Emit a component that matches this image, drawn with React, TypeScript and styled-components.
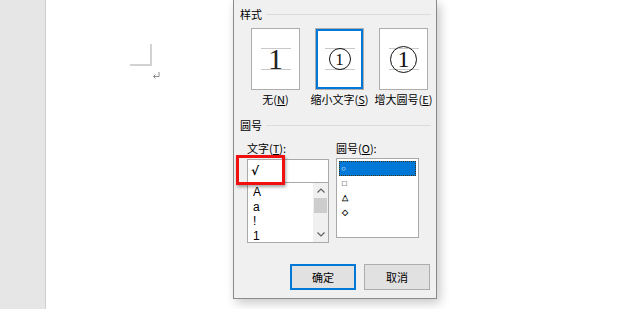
import * as React from 'react';
import styled, { createGlobalStyle } from 'styled-components';

const GlobalStyle = createGlobalStyle`
    html, body {
        margin: 0;
        padding: 0;
    }
    body {
        width: 620px;
        height: 309px;
        overflow: hidden;
        background: #fff;
        font-family: "Noto Sans CJK SC", "Noto Sans", sans-serif;
        font-size: 11px;
        color: #000;
    }
`;

const Screen = styled.div`
    display: flex;
    width: 620px;
    height: 309px;
`;

const Gutter = styled.div`
    width: 45px;
    background: #e6e6e6;
    border-right: 1px solid #cfcfcf;
`;

const Page = styled.div`
    position: relative;
    flex: 1;
    background: #fff;
    padding: 44px 0 0 84px;
`;

const CornerMark = styled.div`
    width: 20px;
    height: 20px;
    border-right: 2px solid #d2d2d2;
    border-bottom: 2px solid #d2d2d2;
`;

const ReturnMark = styled.svg`
    display: block;
    margin: 6px 0 0 22px;
`;

const Dialog = styled.div`
    position: absolute;
    left: 187px;
    top: 0;
    width: 204px;
    height: 299px;
    box-sizing: border-box;
    background: #f0f0f0;
    border: 1px solid #8a8a8a;
    border-top: none;
    box-shadow: 3px 4px 10px rgba(0, 0, 0, 0.22);
    display: flex;
    flex-direction: column;
    font-size: 11px;
`;

const GroupHeader = styled.div`
    display: flex;
    align-items: center;
    gap: 4px;
    height: 16px;
    line-height: 16px;
    margin-top: ${(p: { top: number }) => p.top}px;
    padding: 0 5px 0 6px;
    &::after {
        content: '';
        flex: 1;
        height: 1px;
        background: #dcdcdc;
    }
`;

const StyleRow = styled.div`
    display: flex;
    gap: 15px;
    margin-top: 6px;
    padding-left: 17px;
`;

const StyleOption = styled.div`
    display: flex;
    flex-direction: column;
    align-items: center;
    width: 49px;
`;

const Preview = styled.div<{ selected?: boolean }>`
    display: flex;
    align-items: center;
    justify-content: center;
    width: 49px;
    height: 62px;
    box-sizing: border-box;
    background: #fff;
    border: 1px solid #adadad;
    box-shadow: ${(p) => (p.selected ? 'inset 0 0 0 2px #0078d7' : 'none')};
`;

const Guides = styled.div`
    display: flex;
    align-items: center;
    justify-content: center;
    width: 30px;
    height: 20px;
    border-top: 1px solid #c9c9c9;
    border-bottom: 1px solid #c9c9c9;
`;

const PlainDigit = styled.span`
    font-family: "Liberation Serif", serif;
    font-size: 30px;
    line-height: 1;
    color: #222;
`;

const CircledDigit = styled.span<{ size: number; digit: number }>`
    display: flex;
    align-items: center;
    justify-content: center;
    flex-shrink: 0;
    width: ${(p) => p.size}px;
    height: ${(p) => p.size}px;
    box-sizing: border-box;
    border: 1.3px solid #111;
    border-radius: 50%;
    font-family: "Liberation Serif", serif;
    font-size: ${(p) => p.digit}px;
    line-height: 1;
    color: #111;
`;

const OptionLabel = styled.div`
    margin-top: 1px;
    line-height: 16px;
    white-space: nowrap;
`;

const Fields = styled.div`
    display: flex;
    gap: 7px;
    margin-top: 7px;
    padding-left: 13px;
`;

const Column = styled.div`
    display: flex;
    flex-direction: column;
    width: ${(p: { width: number }) => p.width}px;
`;

const FieldLabel = styled.div`
    line-height: 16px;
    margin-bottom: 3px;
    white-space: nowrap;
`;

const TextBox = styled.div`
    position: relative;
    height: 24px;
    box-sizing: border-box;
    border: 1px solid #a9a9a9;
    background: #fff;
    padding-left: 3px;
    line-height: 22px;
    font-family: "DejaVu Sans", sans-serif;
    font-size: 12px;
    font-weight: bold;
`;

const Highlight = styled.div`
    position: absolute;
    left: -12px;
    top: -5px;
    width: 49px;
    height: 30px;
    box-sizing: border-box;
    border: 3px solid #f01010;
    box-shadow: 1px 2px 3px rgba(0, 0, 0, 0.35);
`;

const ListBox = styled.div`
    display: flex;
    height: ${(p: { height: number }) => p.height}px;
    box-sizing: border-box;
    margin-top: -1px;
    border: 1px solid #a9a9a9;
    background: #fff;
    overflow: hidden;
`;

const Items = styled.div`
    flex: 1;
    padding: 2px 2px 0;
`;

const Item = styled.div<{ active?: boolean }>`
    height: 14.6px;
    box-sizing: border-box;
    line-height: 13px;
    padding-left: ${(p) => (p.active ? 1 : 2)}px;
    font-family: "Liberation Sans", "Noto Sans", sans-serif;
    font-size: ${(p) => (p.active !== undefined ? 8 : 12)}px;
    font-weight: ${(p) => (p.active !== undefined ? 'bold' : 'normal')};
    color: ${(p) => (p.active ? '#ffffff' : '#000000')};
    background: ${(p) => (p.active ? '#0078d7' : 'transparent')};
    border: 1px ${(p) => (p.active ? 'dotted #4a3410' : 'solid transparent')};
`;

const ScrollBar = styled.div`
    display: flex;
    flex-direction: column;
    width: 15px;
    background: #f0f0f0;
`;

const ScrollArrow = styled.div`
    display: flex;
    align-items: center;
    justify-content: center;
    height: 15px;
`;

const Thumb = styled.div`
    height: 15px;
    margin: 0 1px;
    background: #cdcdcd;
`;

const Track = styled.div`
    flex: 1;
`;

const Footer = styled.div`
    display: flex;
    justify-content: flex-end;
    gap: 8px;
    margin-top: 21px;
    padding-right: 6px;
`;

const Button = styled.div<{ primary?: boolean }>`
    display: flex;
    align-items: center;
    justify-content: center;
    width: 66px;
    height: 26px;
    box-sizing: border-box;
    background: #e1e1e1;
    border: 1px solid ${(p) => (p.primary ? '#0078d7' : '#adadad')};
    box-shadow: ${(p) => (p.primary ? 'inset 0 0 0 1px #0078d7' : 'none')};
`;

const Chevron = ({ up }: { up?: boolean }) => (
    <svg width="8" height="5" viewBox="0 0 8 5">
        <path
            d={up ? 'M0.5 4.5 L4 1 L7.5 4.5' : 'M0.5 0.5 L4 4 L7.5 0.5'}
            fill="none"
            stroke="#606060"
            strokeWidth="1.2"
        />
    </svg>
);

const App: React.FC = () => {
    return (
        <Screen>
            <GlobalStyle />
            <Gutter />
            <Page>
                <CornerMark />
                <ReturnMark width="8" height="7" viewBox="0 0 8 7">
                    <path d="M7 0 V4.5 H1.5 M3.5 2.5 L1.5 4.5 L3.5 6.5" fill="none" stroke="#8c8c8c" strokeWidth="1" />
                </ReturnMark>

                <Dialog>
                    <GroupHeader top={6}>样式</GroupHeader>
                    <StyleRow>
                        <StyleOption>
                            <Preview>
                                <Guides>
                                    <PlainDigit>1</PlainDigit>
                                </Guides>
                            </Preview>
                            <OptionLabel>无(<u>N</u>)</OptionLabel>
                        </StyleOption>
                        <StyleOption>
                            <Preview selected>
                                <Guides>
                                    <CircledDigit size={22} digit={17}>1</CircledDigit>
                                </Guides>
                            </Preview>
                            <OptionLabel>缩小文字(<u>S</u>)</OptionLabel>
                        </StyleOption>
                        <StyleOption>
                            <Preview>
                                <Guides>
                                    <CircledDigit size={27} digit={24}>1</CircledDigit>
                                </Guides>
                            </Preview>
                            <OptionLabel>增大圆号(<u>E</u>)</OptionLabel>
                        </StyleOption>
                    </StyleRow>

                    <GroupHeader top={10}>圆号</GroupHeader>
                    <Fields>
                        <Column width={82}>
                            <FieldLabel>文字(<u>T</u>):</FieldLabel>
                            <TextBox>
                                √
                                <Highlight />
                            </TextBox>
                            <ListBox height={61}>
                                <Items>
                                    {['A', 'a', '!', '1'].map((c) => (
                                        <Item key={c}>{c}</Item>
                                    ))}
                                </Items>
                                <ScrollBar>
                                    <ScrollArrow><Chevron up /></ScrollArrow>
                                    <Thumb />
                                    <Track />
                                    <ScrollArrow><Chevron /></ScrollArrow>
                                </ScrollBar>
                            </ListBox>
                        </Column>
                        <Column width={83}>
                            <FieldLabel>圆号(<u>O</u>):</FieldLabel>
                            <ListBox height={80}>
                                <Items>
                                    {['○', '□', '△', '◇'].map((c, i) => (
                                        <Item key={c} active={i === 0}>{c}</Item>
                                    ))}
                                </Items>
                            </ListBox>
                        </Column>
                    </Fields>

                    <Footer>
                        <Button primary>确定</Button>
                        <Button>取消</Button>
                    </Footer>
                </Dialog>
            </Page>
        </Screen>
    );
};

export default App;
